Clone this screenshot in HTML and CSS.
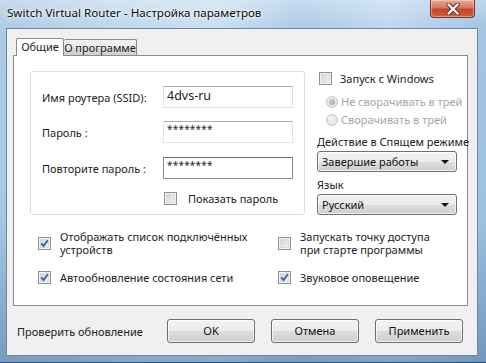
FILE: index.html
```html
<!DOCTYPE html>
<html>
<head>
<meta charset="utf-8">
<link rel="stylesheet" href="styles.css">
</head>
<body>
<div class="window">
  <div class="titlebar"><span class="title">Switch Virtual Router - Настройка параметров</span></div>
  <div class="close">
    <svg width="20" height="12" viewBox="0 0 20 12"><path d="M5.5 1.5 L14.5 10.5 M14.5 1.5 L5.5 10.5" stroke="#6b2a1e" stroke-width="4.2" stroke-linecap="round"/><path d="M5.5 1.5 L14.5 10.5 M14.5 1.5 L5.5 10.5" stroke="#ffffff" stroke-width="2.4" stroke-linecap="round"/></svg>
  </div>
  <div class="client">
    <div class="tabs">
      <div class="tab active">Общие</div>
      <div class="tab">О программе</div>
    </div>
    <div class="panel">
      <div class="top">
        <div class="group">
          <div class="frow"><span class="flabel">Имя роутера (SSID):</span><span class="input big">4dvs-ru</span></div>
          <div class="frow r2"><span class="flabel">Пароль :</span><span class="input">********</span></div>
          <div class="frow r3"><span class="flabel">Повторите пароль :</span><span class="input focused">********</span></div>
          <div class="showpw"><span class="cb"></span><span>Показать пароль</span></div>
        </div>
        <div class="side">
          <div class="srow start"><span class="cb"></span><span class="stext">Запуск с Windows</span></div>
          <div class="rrow first"><span class="radio on"></span><span>Не сворачивать в трей</span></div>
          <div class="rrow"><span class="radio"></span><span>Сворачивать в трей</span></div>
          <div class="slabel first">Действие в Спящем режиме</div>
          <div class="select"><span>Завершие работы</span><span class="arrow"></span></div>
          <div class="slabel">Язык</div>
          <div class="select"><span>Русский</span><span class="arrow"></span></div>
        </div>
      </div>
      <div class="opts">
        <div class="opt"><span class="cb checked"></span><span class="otext">Отображать список подключённых устройств</span></div>
        <div class="opt right"><span class="cb"></span><span class="otext">Запускать точку доступа при старте программы</span></div>
        <div class="opt row2"><span class="cb checked"></span><span class="otext">Автообновление состояния сети</span></div>
        <div class="opt right row2"><span class="cb checked"></span><span class="otext">Звуковое оповещение</span></div>
      </div>
    </div>
    <div class="footer">
      <span class="update">Проверить обновление</span>
      <div class="buttons">
        <div class="btn">OK</div>
        <div class="btn">Отмена</div>
        <div class="btn">Применить</div>
      </div>
    </div>
  </div>
</div>
</body>
</html>
```
FILE: styles.css
```css
* { box-sizing: border-box; }
html, body { margin: 0; padding: 0; }
body {
  width: 486px;
  height: 363px;
  overflow: hidden;
  font-family: "Noto Sans", "Open Sans", sans-serif;
  font-size: 11px;
  color: #1e1e1e;
}
.window {
  position: relative;
  width: 486px;
  height: 363px;
  display: flex;
  flex-direction: column;
  background:
    linear-gradient(180deg, rgba(255,255,255,0.35) 0px, rgba(255,255,255,0.05) 28px, rgba(0,0,0,0) 60%, rgba(30,70,120,0.35) 100%),
    linear-gradient(90deg, #a9c7e3 0%, #bdd6ec 25%, #c6dcef 45%, #a7c8e6 62%, #bcd6ee 80%, #9ec1e0 100%);
  border-bottom: 1px solid #2b5076;
}
.titlebar {
  height: 28px;
  flex: none;
  padding: 5px 0 0 7px;
  white-space: nowrap;
}
.title {
  font-size: 11.6px;
  color: #0c0c0c;
  text-shadow: 0 0 6px rgba(255,255,255,0.9), 0 0 3px rgba(255,255,255,0.9);
}
.close {
  position: absolute;
  left: 430px;
  top: 0;
  width: 45px;
  height: 18px;
  border: 1px solid #7a3325;
  border-top: none;
  border-radius: 0 0 4px 4px;
  background: linear-gradient(180deg, #e9a897 0%, #d9765f 45%, #c5442a 55%, #d0603e 100%);
  box-shadow: inset 0 0 0 1px rgba(255,255,255,0.35);
  display: flex;
  align-items: center;
  justify-content: center;
}
.client {
  flex: none;
  margin: 0 8px 0 6px;
  height: 328px;
  border: 1px solid #6e88a3;
  background: #f0f0f0;
  padding: 9px 9px 0 6px;
  display: flex;
  flex-direction: column;
}
.tabs {
  display: flex;
  align-items: flex-end;
  height: 18px;
  margin: 0 0 -1px 3px;
  position: relative;
  z-index: 1;
}
.tab {
  height: 16px;
  margin-bottom: 1px;
  width: 73px;
  border: 1px solid #898c95;
  border-bottom: none;
  border-left: none;
  border-radius: 2px 2px 0 0;
  background: linear-gradient(180deg, #f2f2f2 0%, #ebebeb 50%, #dddddd 51%, #cfcfcf 100%);
  text-align: center;
  line-height: 15px;
  white-space: nowrap;
}
.tab.active {
  width: 48px;
  height: 18px;
  margin-bottom: 0;
  border-left: 1px solid #898c95;
  background: #ffffff;
  line-height: 16px;
}
.panel {
  height: 251px;
  border: 1px solid #898c95;
  background: #ffffff;
  padding: 15px 0 0 16px;
}
.top {
  display: flex;
}
.group {
  width: 275px;
  height: 144px;
  border: 1px solid #d5dfe5;
  border-radius: 3px;
  padding: 14px 0 0 11px;
}
.frow {
  display: flex;
  align-items: center;
  height: 22px;
}
.frow.r2 { margin-top: 13px; }
.frow.r3 { margin-top: 14px; }
.flabel {
  width: 121px;
  flex: none;
  color: #222;
  white-space: nowrap;
}
.input {
  width: 130px;
  height: 22px;
  border: 1px solid #e2e3ea;
  border-top-color: #abadb3;
  background: #fff;
  padding: 1px 0 0 3px;
  line-height: 13px;
  font-size: 10px;
  letter-spacing: 0.2px;
  color: #222;
}
.input.big {
  font-size: 12.5px;
  line-height: 18px;
  padding-top: 0;
  letter-spacing: 0;
}
.input.focused {
  border-color: #7f8e9e;
  border-top-color: #5b6f83;
}
.showpw {
  display: flex;
  align-items: center;
  margin: 12px 0 0 122px;
  height: 14px;
  color: #222;
  white-space: nowrap;
}
.showpw .cb { margin-right: 11px; }
.cb {
  display: inline-block;
  flex: none;
  width: 13px;
  height: 13px;
  border: 1px solid #8e8f8f;
  background: linear-gradient(135deg, #cbcfd5 0%, #e6e8eb 60%, #f5f5f6 100%);
  box-shadow: inset 0 0 0 1px #f4f4f4, inset 0 0 0 2px #d8dadd;
  position: relative;
}
.cb.checked::after {
  content: "";
  position: absolute;
  left: 1px;
  top: 1px;
  width: 9px;
  height: 9px;
  background: url("data:image/svg+xml;utf8,<svg xmlns='http://www.w3.org/2000/svg' width='9' height='9' viewBox='0 0 9 9'><path d='M1.3 4.3 L3.6 7 L7.8 1.3' stroke='%23405d96' stroke-width='1.9' fill='none'/></svg>") no-repeat;
}
.side {
  margin-left: 12px;
  width: 141px;
  display: flex;
  flex-direction: column;
  white-space: nowrap;
}
.srow {
  display: flex;
  align-items: center;
  height: 13px;
  margin: 1px 0 0 2px;
}
.srow .stext { margin-left: 8px; color: #222; }
.rrow {
  display: flex;
  align-items: center;
  height: 13px;
  margin: 5px 0 0 9px;
  color: #a6a6a6;
}
.rrow.first { margin-top: 10px; }
.radio {
  display: inline-block;
  flex: none;
  width: 12px;
  height: 12px;
  border-radius: 50%;
  border: 1px solid #c7c7c7;
  background: radial-gradient(circle at 40% 40%, #f4f4f4 0%, #dcdcdc 100%);
  margin-right: 3px;
  position: relative;
}
.radio.on::after {
  content: "";
  position: absolute;
  left: 2px;
  top: 2px;
  width: 6px;
  height: 6px;
  border-radius: 50%;
  background: radial-gradient(circle at 40% 40%, #d0d0d0 0%, #9a9a9a 100%);
}
.slabel {
  height: 14px;
  line-height: 14px;
  margin-top: 6px;
  color: #222;
}
.slabel.first { margin-top: 9px; }
.select {
  margin-top: 2px;
  width: 140px;
  height: 21px;
  border: 1px solid #707070;
  border-radius: 3px;
  background: linear-gradient(180deg, #f2f2f2 0%, #ebebeb 50%, #dddddd 51%, #cfcfcf 100%);
  box-shadow: inset 0 0 0 1px rgba(255,255,255,0.7);
  display: flex;
  align-items: center;
  justify-content: space-between;
  padding: 0 7px 0 4px;
  color: #111;
}
.arrow {
  width: 0;
  height: 0;
  border-left: 4px solid transparent;
  border-right: 4px solid transparent;
  border-top: 4px solid #111;
}
.opts {
  display: grid;
  grid-template-columns: 240px 1fr;
  row-gap: 14px;
  margin: 15px 0 0 8px;
}
.opt {
  display: flex;
  align-items: center;
  height: 26px;
}
.opt.row2 { height: 14px; }
.opt .cb { margin-right: 9px; }
.otext {
  line-height: 13px;
  color: #222;
  width: 190px;
}
.opt.right .otext { width: 140px; }
.footer {
  display: flex;
  align-items: center;
  padding: 13px 5px 0 4px;
}
.update { color: #222; }
.buttons {
  margin-left: auto;
  display: flex;
  gap: 16px;
}
.btn {
  width: 88px;
  height: 24px;
  border: 1px solid #707070;
  border-radius: 3px;
  background: linear-gradient(180deg, #f2f2f2 0%, #ebebeb 50%, #dddddd 51%, #cfcfcf 100%);
  box-shadow: inset 0 0 0 1px rgba(255,255,255,0.7);
  text-align: center;
  line-height: 22px;
  color: #111;
}
```
